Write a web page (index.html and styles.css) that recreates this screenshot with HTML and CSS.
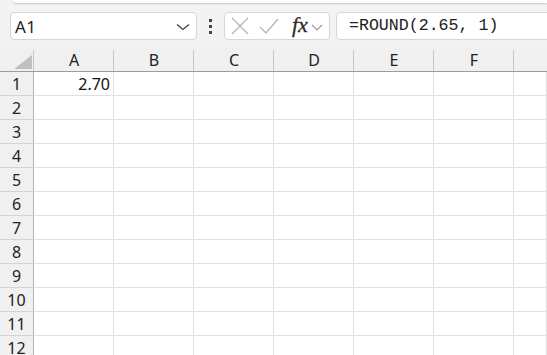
FILE: index.html
```html
<!DOCTYPE html>
<html>
<head>
<meta charset="utf-8">
<link rel="stylesheet" href="styles.css">
</head>
<body>
<div class="toolbar">
  <div class="ribbon-edge"></div>
  <div class="bar">
    <div class="namebox">
      <span class="ref">A1</span>
      <svg class="chev" width="14" height="8" viewBox="0 0 14 8"><path d="M1 1.5 L7 6.5 L13 1.5" fill="none" stroke="#404040" stroke-width="1.3"/></svg>
    </div>
    <div class="dots"><i></i><i></i><i></i></div>
    <div class="fbtns">
      <svg width="18" height="18" viewBox="0 0 18 18"><path d="M1 1 L17 17 M17 1 L1 17" stroke="#b4b4b4" stroke-width="1.3" fill="none"/></svg>
      <svg width="20" height="18" viewBox="0 0 20 18"><path d="M1 10 L7 16 L19 2" stroke="#b4b4b4" stroke-width="1.3" fill="none"/></svg>
      <span class="fx">fx</span>
      <svg class="fchev" width="12" height="7" viewBox="0 0 12 7"><path d="M1 1 L6 6 L11 1" fill="none" stroke="#9a9a9a" stroke-width="1.2"/></svg>
    </div>
    <div class="formula">=ROUND(2.65, 1)</div>
  </div>
</div>
<div class="sheet">
  <div class="hdr corner"><span class="tri"></span></div>
  <div class="hdr col">A</div>
  <div class="hdr col">B</div>
  <div class="hdr col">C</div>
  <div class="hdr col">D</div>
  <div class="hdr col">E</div>
  <div class="hdr col">F</div>
  <div class="hdr col last"></div>

  <div class="rh">1</div><div class="c num">2.70</div><div class="c"></div><div class="c"></div><div class="c"></div><div class="c"></div><div class="c"></div><div class="c"></div>
  <div class="rh">2</div><div class="c"></div><div class="c"></div><div class="c"></div><div class="c"></div><div class="c"></div><div class="c"></div><div class="c"></div>
  <div class="rh">3</div><div class="c"></div><div class="c"></div><div class="c"></div><div class="c"></div><div class="c"></div><div class="c"></div><div class="c"></div>
  <div class="rh">4</div><div class="c"></div><div class="c"></div><div class="c"></div><div class="c"></div><div class="c"></div><div class="c"></div><div class="c"></div>
  <div class="rh">5</div><div class="c"></div><div class="c"></div><div class="c"></div><div class="c"></div><div class="c"></div><div class="c"></div><div class="c"></div>
  <div class="rh">6</div><div class="c"></div><div class="c"></div><div class="c"></div><div class="c"></div><div class="c"></div><div class="c"></div><div class="c"></div>
  <div class="rh">7</div><div class="c"></div><div class="c"></div><div class="c"></div><div class="c"></div><div class="c"></div><div class="c"></div><div class="c"></div>
  <div class="rh">8</div><div class="c"></div><div class="c"></div><div class="c"></div><div class="c"></div><div class="c"></div><div class="c"></div><div class="c"></div>
  <div class="rh">9</div><div class="c"></div><div class="c"></div><div class="c"></div><div class="c"></div><div class="c"></div><div class="c"></div><div class="c"></div>
  <div class="rh">10</div><div class="c"></div><div class="c"></div><div class="c"></div><div class="c"></div><div class="c"></div><div class="c"></div><div class="c"></div>
  <div class="rh">11</div><div class="c"></div><div class="c"></div><div class="c"></div><div class="c"></div><div class="c"></div><div class="c"></div><div class="c"></div>
  <div class="rh">12</div><div class="c"></div><div class="c"></div><div class="c"></div><div class="c"></div><div class="c"></div><div class="c"></div><div class="c"></div>
</div>
</body>
</html>
```

FILE: styles.css
```css
html, body {
  margin: 0;
  padding: 0;
  background: #ffffff;
  overflow: hidden;
  width: 547px;
  height: 355px;
  font-family: "Noto Sans", "Open Sans", sans-serif;
}

.toolbar {
  height: 48px;
  background: #f3f3f3;
  overflow: hidden;
}

.ribbon-edge {
  margin-left: 13px;
  height: 3px;
  background: #ffffff;
  border-bottom-left-radius: 4px;
  box-shadow: 0 1px 2px rgba(0, 0, 0, 0.18);
}

.bar {
  display: flex;
  align-items: center;
  padding: 9px 0 0 10px;
  margin-right: -12px;
}

.namebox {
  box-sizing: border-box;
  width: 187px;
  height: 28px;
  background: #fff;
  border: 1px solid #d6d6d6;
  border-radius: 4px;
  display: flex;
  align-items: center;
  justify-content: space-between;
  padding: 0 6px 0 4px;
}

.ref {
  font-size: 17px;
  color: #222;
  letter-spacing: 0.3px;
}

.chev { margin-top: 1px; }

.dots {
  width: 27px;
  display: flex;
  flex-direction: column;
  align-items: center;
  gap: 3px;
}

.dots i {
  display: block;
  width: 3px;
  height: 3px;
  background: #444;
}

.fbtns {
  box-sizing: border-box;
  width: 106px;
  height: 28px;
  background: #fff;
  border: 1px solid #d6d6d6;
  border-radius: 4px;
  display: flex;
  align-items: center;
  padding-left: 6px;
  gap: 0;
}

.fbtns svg:nth-child(1) { margin-right: 10px; }
.fbtns svg:nth-child(2) { margin-right: 13px; }

.fx {
  font-family: "Liberation Serif", serif;
  font-style: italic;
  font-size: 22px;
  color: #2a2a2a;
  line-height: 1;
  margin-top: -3px;
  margin-right: 3px;
  -webkit-text-stroke: 0.3px #2a2a2a;
}

.fchev { margin-top: 2px; }

.formula {
  box-sizing: border-box;
  flex: 1;
  height: 28px;
  margin-left: 6px;
  background: #fff;
  border: 1px solid #d6d6d6;
  border-radius: 4px;
  padding-left: 12px;
  font-family: "Liberation Mono", monospace;
  font-size: 16.6px;
  line-height: 26px;
  color: #222;
  white-space: nowrap;
}

.sheet {
  display: grid;
  grid-template-columns: 34px repeat(6, 80px) 1fr;
  grid-auto-rows: 24px;
}

.hdr {
  position: relative;
  background: #f0f0f0;
  border-bottom: 1px solid #9c9c9c;
  box-sizing: border-box;
  font-size: 16px;
  color: #222;
  display: flex;
  align-items: center;
  justify-content: center;
}

.hdr.col::after,
.hdr.corner::after {
  content: "";
  position: absolute;
  right: 0;
  top: 2px;
  bottom: 0;
  width: 1px;
  background: #c6c6c6;
}

.hdr.last::after { display: none; }

.corner .tri {
  position: absolute;
  right: 2px;
  bottom: 2px;
  width: 0;
  height: 0;
  border-left: 18px solid transparent;
  border-bottom: 14px solid #c0c0c0;
}

.rh {
  background: #f0f0f0;
  border-right: 1px solid #b4b4b4;
  border-bottom: 1px solid #d4d4d4;
  box-sizing: border-box;
  font-size: 16px;
  color: #222;
  display: flex;
  align-items: center;
  justify-content: center;
}

.c {
  border-right: 1px solid #e0e0e0;
  border-bottom: 1px solid #e0e0e0;
  box-sizing: border-box;
  font-size: 16px;
  color: #111;
  display: flex;
  align-items: center;
}

.c.num {
  justify-content: flex-end;
  padding-right: 3px;
}
```
